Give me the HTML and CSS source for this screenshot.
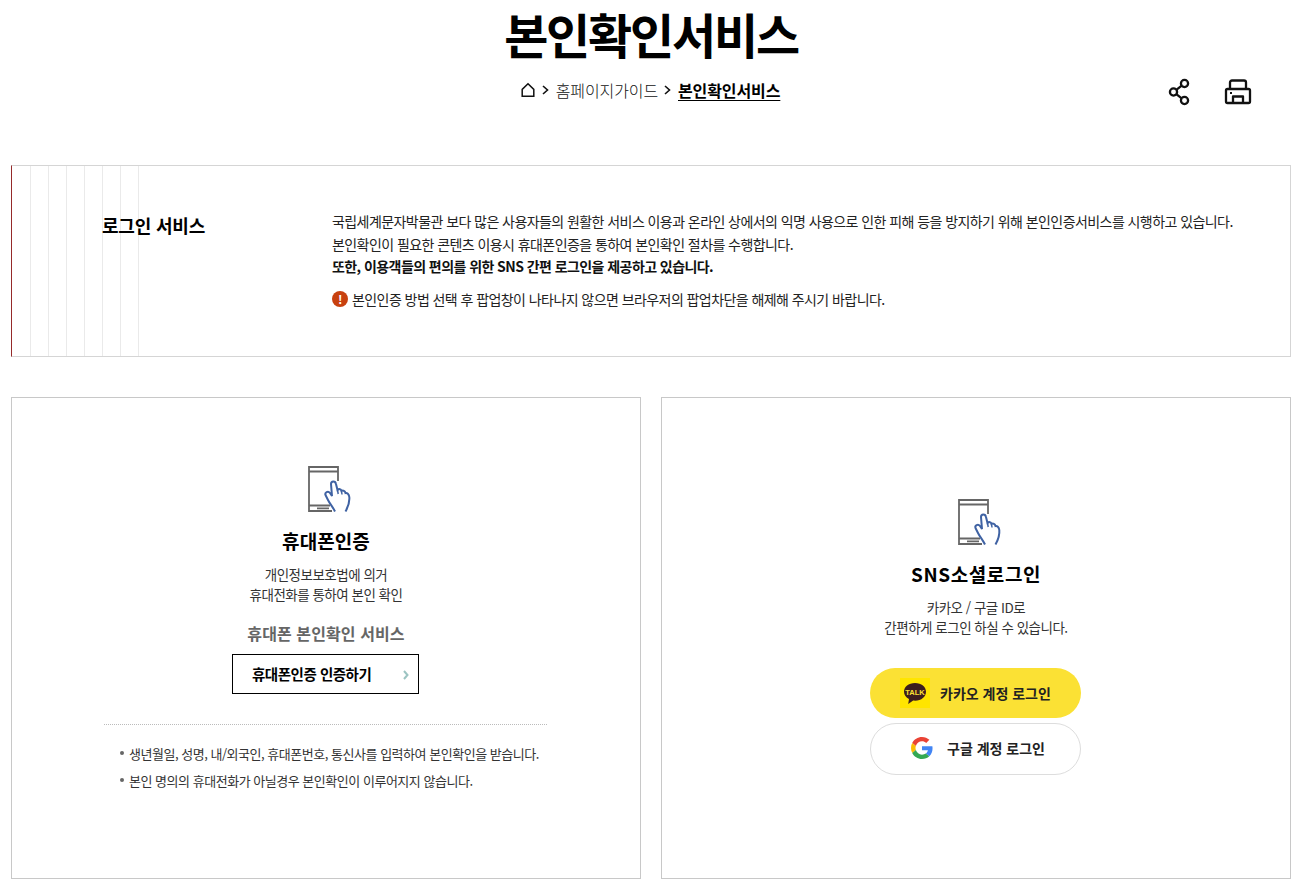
FILE: index.html
```html
<!DOCTYPE html>
<html lang="ko">
<head>
    <meta charset="UTF-8">
    <meta name="viewport" content="width=device-width, initial-scale=1.0">
    <title>본인확인서비스</title>
    <link rel="stylesheet" href="styles.css">
</head>
<body>
    <div class="page">
        <header class="page-head">
            <h1>본인확인서비스</h1>
            <div class="crumb-row">
                <ol class="crumbs">
                    <li>
                        <svg class="home-icon" width="16" height="16" viewBox="0 0 16 16" fill="none" stroke="#111" stroke-width="1.5"><path d="M2.200 14.200V7.400L8 1.800l5.800 5.600v6.800z"/></svg>
                    </li>
                    <li class="sep"><svg width="7" height="10" viewBox="0 0 7 10" fill="none" stroke="#111" stroke-width="1.600"><path d="M1 1l4.500 4L1 9"/></svg></li>
                    <li>홈페이지가이드</li>
                    <li class="sep"><svg width="7" height="10" viewBox="0 0 7 10" fill="none" stroke="#111" stroke-width="1.600"><path d="M1 1l4.500 4L1 9"/></svg></li>
                    <li class="current">본인확인서비스</li>
                </ol>
                <div class="tools">
                    <svg width="24" height="28" viewBox="0 0 24 28" fill="none" stroke="#111" stroke-width="2.300"><circle cx="16.500" cy="5.500" r="3.600"/><circle cx="5.500" cy="14" r="3.600"/><circle cx="16.500" cy="22.500" r="3.600"/><path d="M13.700 7.700l-5.400 4.200M8.300 16.100l5.400 4.200"/></svg>
                    <svg width="28" height="26" viewBox="0 0 28 26" fill="none" stroke="#111" stroke-width="2.300" stroke-linejoin="round"><path d="M6 10V3.500A2 2 0 0 1 8 1.500h12a2 2 0 0 1 2 2V10"/><path d="M3.500 10h21a1.500 1.500 0 0 1 1.500 1.500v11a1.500 1.500 0 0 1-1.500 1.500h-21A1.500 1.500 0 0 1 2 22.500v-11A1.500 1.500 0 0 1 3.500 10z"/><path d="M9 24v-6.500h10V24"/><path d="M6 14h2" stroke-width="2"/></svg>
                </div>
            </div>
        </header>

        <section class="intro">
            <h2>로그인 서비스</h2>
            <div class="intro-text">
                <p>국립세계문자박물관 보다 많은 사용자들의 원활한 서비스 이용과 온라인 상에서의 익명 사용으로 인한 피해 등을 방지하기 위해 본인인증서비스를 시행하고 있습니다.</p>
                <p>본인확인이 필요한 콘텐츠 이용시 휴대폰인증을 통하여 본인확인 절차를 수행합니다.</p>
                <p class="strong">또한, 이용객들의 편의를 위한 SNS 간편 로그인을 제공하고 있습니다.</p>
                <p class="notice"><span class="alert-icon">!</span>본인인증 방법 선택 후 팝업창이 나타나지 않으면 브라우저의 팝업차단을 해제해 주시기 바랍니다.</p>
            </div>
        </section>

        <div class="cards">
            <section class="card card-phone">
                <svg class="phone-icon" width="44" height="46" viewBox="-4 0 44 46" fill="none">
                    <path d="M24 45H1V1h29v14M1 5.500h29M1 39.500h21M9 42.300h12" stroke="#666" stroke-width="1.800"/>
                    <path d="M27 45.500C25 41 22 38 20 34l-2.500-5c-1-2.500 2.500-4.500 4.500-2l2 3-1-12c0-3.500 4.500-3.500 5 0l1.500 6c1.500-1.500 3.500-1 4 1 1.500-1 3.500 0 4 2 1.500-.5 3.500 1 3.800 4 .5 5-1.300 10-3.800 14.500" stroke="#3f62a3" stroke-width="2" fill="#fff"/>
                    <path d="M29.500 24l.7 4M33.500 25l.5 3.500" stroke="#3f62a3" stroke-width="1.500"/>
                </svg>
                <h3>휴대폰인증</h3>
                <p class="desc">개인정보보호법에 의거<br>휴대전화를 통하여 본인 확인</p>
                <h4>휴대폰 본인확인 서비스</h4>
                <a class="verify-btn" href="#">휴대폰인증 인증하기<svg class="chev" width="6" height="10" viewBox="0 0 6 10" fill="none" stroke="#9cc4c2" stroke-width="2"><path d="M1 1l3.500 4L1 9"/></svg></a>
                <ul class="notes">
                    <li>생년월일, 성명, 내/외국인, 휴대폰번호, 통신사를 입력하여 본인확인을 받습니다.</li>
                    <li>본인 명의의 휴대전화가 아닐경우 본인확인이 이루어지지 않습니다.</li>
                </ul>
            </section>

            <section class="card card-sns">
                <svg class="phone-icon" width="44" height="46" viewBox="-4 0 44 46" fill="none">
                    <path d="M24 45H1V1h29v14M1 5.500h29M1 39.500h21M9 42.300h12" stroke="#666" stroke-width="1.800"/>
                    <path d="M27 45.500C25 41 22 38 20 34l-2.500-5c-1-2.500 2.500-4.500 4.500-2l2 3-1-12c0-3.500 4.500-3.500 5 0l1.500 6c1.500-1.500 3.500-1 4 1 1.500-1 3.500 0 4 2 1.500-.5 3.500 1 3.800 4 .5 5-1.300 10-3.800 14.500" stroke="#3f62a3" stroke-width="2" fill="#fff"/>
                    <path d="M29.500 24l.7 4M33.500 25l.5 3.500" stroke="#3f62a3" stroke-width="1.500"/>
                </svg>
                <h3 class="sns-title">SNS소셜로그인</h3>
                <p class="desc">카카오 / 구글 ID로<br>간편하게 로그인 하실 수 있습니다.</p>
                <a class="sns-btn kakao" href="#">
                    <span class="kakao-logo">
                        <svg width="24" height="23" viewBox="0 0 24 23"><path d="M12 1C5.500 1 1 4.700 1 9.800c0 3.200 2 5.800 5 7.300L5.200 22l5-3.400c.6.100 1.200.1 1.800.1 6.500 0 11-3.800 11-8.900S18.500 1 12 1z" fill="#3c1e1e"/><text x="12" y="12.800" class="talk-text">TALK</text></svg>
                    </span>
                    카카오 계정 로그인
                </a>
                <a class="sns-btn google" href="#">
                    <svg width="22" height="22" viewBox="0 0 48 48"><path fill="#EA4335" d="M24 9.500c3.500 0 6.700 1.200 9.200 3.600l6.900-6.900C35.900 2.400 30.500 0 24 0 14.600 0 6.500 5.400 2.600 13.200l8 6.200C12.500 13.700 17.800 9.500 24 9.500z"/><path fill="#4285F4" d="M47 24.500c0-1.600-.1-3.100-.4-4.500H24v9h12.900c-.6 3-2.200 5.500-4.700 7.200l7.700 6c4.500-4.200 7.100-10.300 7.100-17.700z"/><path fill="#FBBC05" d="M10.600 28.600c-.5-1.400-.8-3-.8-4.600s.3-3.200.8-4.600l-8-6.200C.9 16.500 0 20.100 0 24s.9 7.500 2.600 10.800l8-6.200z"/><path fill="#34A853" d="M24 48c6.500 0 11.900-2.100 15.900-5.800l-7.700-6c-2.100 1.400-4.900 2.300-8.200 2.300-6.200 0-11.500-4.200-13.400-9.900l-8 6.200C6.500 42.600 14.600 48 24 48z"/></svg>
                    구글 계정 로그인
                </a>
            </section>
        </div>
    </div>
</body>
</html>
```

FILE: styles.css
```css
* {
    box-sizing: border-box;
}
body {
    margin: 0;
    background: #fff;
    color: #111;
    font-family: "Noto Sans CJK KR", "Noto Sans", sans-serif;
    font-size: 14px;
}
.page {
    padding: 0 4px 0 11px;
}
.page-head {
    height: 165px;
    padding-top: 5px;
    text-align: center;
}
h1 {
    margin: 0;
    font-size: 48px;
    line-height: 56px;
    font-weight: 700;
    letter-spacing: -2.200px;
    color: #000;
}
.crumb-row {
    position: relative;
    margin-top: 15px;
}
.crumbs {
    display: flex;
    justify-content: center;
    align-items: center;
    gap: 6px;
    list-style: none;
    margin: 0 2px 0 0;
    padding: 0;
    height: 28px;
    font-size: 16px;
    letter-spacing: -0.100px;
    color: #111;
    font-weight: 300;
}
.crumbs li {
    display: flex;
    align-items: center;
}
.crumbs .sep {
    width: 8px;
}
.crumbs .current {
    font-weight: 700;
    color: #000;
    text-decoration: underline;
    text-underline-offset: 3px;
}
.tools {
    position: absolute;
    top: 2px;
    right: 39px;
    display: flex;
    gap: 32px;
    align-items: center;
}
.intro {
    display: flex;
    height: 192px;
    border: 1px solid #d5d5d5;
    border-left: 1px solid #952a2a;
    background-image: repeating-linear-gradient(90deg, transparent 0, transparent 17px, #eaeaea 17px, #eaeaea 18px);
    background-position: 1px 0;
    background-size: 127px 100%;
    background-repeat: no-repeat;
}
.intro h2 {
    width: 320px;
    margin: 0;
    padding: 45px 0 0 90px;
    font-size: 18px;
    line-height: 28px;
    font-weight: 700;
    letter-spacing: -0.200px;
    color: #000;
}
.intro-text {
    padding-top: 44px;
    font-size: 14px;
    line-height: 22.500px;
    letter-spacing: -0.570px;
    color: #222;
}
.intro-text p {
    margin: 0;
}
.intro-text .strong {
    font-weight: 700;
    color: #111;
}
.intro-text .notice {
    display: flex;
    align-items: center;
    gap: 4px;
    margin-top: 10px;
}
.alert-icon {
    width: 16px;
    height: 16px;
    border-radius: 50%;
    background: #c8410f;
    color: #fff;
    font-size: 12px;
    font-weight: 700;
    line-height: 16px;
    text-align: center;
}
.cards {
    display: flex;
    gap: 20px;
    margin-top: 40px;
}
.card {
    width: 630px;
    height: 482px;
    border: 1px solid #c8c8c8;
    text-align: center;
}
.card-phone {
    padding-top: 68px;
}
.card-sns {
    padding-top: 101px;
}
.phone-icon {
    display: block;
    margin: 0 auto;
    overflow: visible;
}
.card h3 {
    margin: 15px 0 0;
    font-size: 19px;
    line-height: 28px;
    font-weight: 700;
    letter-spacing: 0.100px;
    color: #000;
}
.card .sns-title {
    letter-spacing: 0.600px;
}
.desc {
    margin: 10px 0 0;
    font-size: 13.500px;
    line-height: 19.500px;
    letter-spacing: -0.500px;
    color: #333;
}
.card h4 {
    margin: 16px 0 0;
    font-size: 16px;
    line-height: 26px;
    font-weight: 700;
    letter-spacing: 0.100px;
    color: #666;
}
.verify-btn {
    position: relative;
    display: block;
    width: 187px;
    height: 40px;
    margin: 8px 0 0 220px;
    padding-left: 19px;
    border: 1px solid #000;
    font-size: 14.500px;
    line-height: 38px;
    font-weight: 700;
    letter-spacing: -0.480px;
    text-align: left;
    color: #000;
    text-decoration: none;
}
.chev {
    position: absolute;
    right: 9px;
    top: 15px;
}
.notes {
    width: 443px;
    margin: 30px 0 0 92px;
    padding: 15px 0 0 15px;
    border-top: 1px dotted #bbb;
    list-style: none;
    font-size: 13px;
    line-height: 27px;
    letter-spacing: -0.480px;
    color: #333;
    text-align: left;
}
.notes li {
    position: relative;
    padding-left: 10px;
}
.notes li::before {
    content: "";
    position: absolute;
    left: 1px;
    top: 11px;
    width: 4px;
    height: 4px;
    border-radius: 50%;
    background: #666;
}
.sns-btn {
    display: flex;
    align-items: center;
    width: 211px;
    margin: 0 0 0 208px;
    border-radius: 26px;
    font-size: 14px;
    font-weight: 700;
    color: #222;
    text-decoration: none;
}
.kakao {
    height: 50px;
    margin-top: 31px;
    padding-left: 30px;
    gap: 10px;
    background: #fbe134;
}
.kakao-logo {
    display: flex;
    align-items: center;
    justify-content: center;
    width: 30px;
    height: 30px;
    background: #ffe500;
}
.talk-text {
    font-family: "Liberation Sans", sans-serif;
    font-size: 7.500px;
    font-weight: 700;
    fill: #fbe134;
    text-anchor: middle;
}
.google {
    height: 52px;
    margin-top: 5px;
    padding: 0 0 2px 40px;
    gap: 14px;
    border: 1px solid #ddd;
    background: #fff;
}
```
